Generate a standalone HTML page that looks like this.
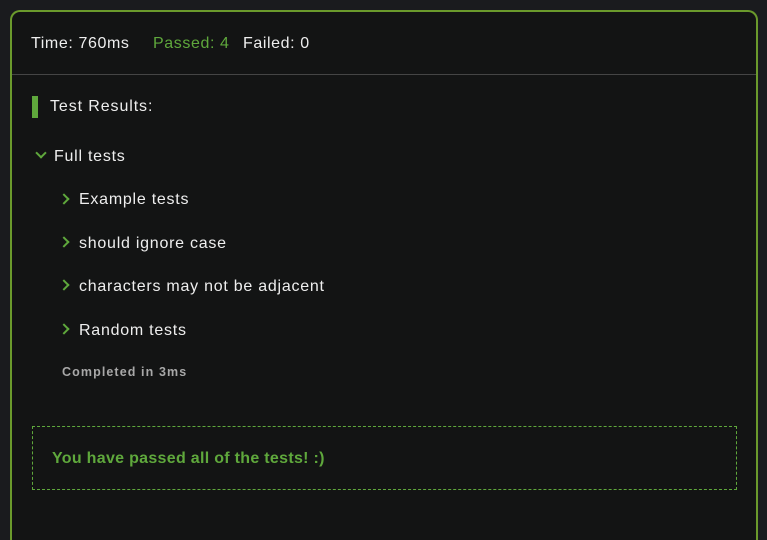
<!DOCTYPE html>
<html style="overflow:hidden;height:540px"><head><style>
body{margin:0;width:767px;height:540px;background:#1a1b1e;overflow:hidden;position:relative;font-family:"Liberation Sans",sans-serif;}
.box{position:absolute;left:10px;top:10px;width:744px;height:528px;border:2px solid #6b9a2c;border-bottom:0;border-radius:10px 10px 0 0;background:#131414;}
.hdr{position:absolute;left:0;top:0;width:744px;height:62px;border-bottom:1px solid #454545;}
.t{position:absolute;font-size:16px;letter-spacing:.75px;color:#eee;white-space:nowrap;}
.g{color:#5fa83c;}
.bar{position:absolute;left:20px;top:84px;width:6px;height:22px;background:#5fa83c;}
.ch{position:absolute;width:6px;height:6px;border-right:2px solid #5fa83c;border-bottom:2px solid #5fa83c;}
.dash{position:absolute;left:20px;top:414px;width:703px;height:62px;border:1px dashed #5fa83c;}
</style></head><body>
<div class="box">
<div class="hdr"></div>
<div class="t" style="left:19px;top:23px;letter-spacing:.6px">Time: 760ms</div>
<div class="t g" style="left:141px;top:23px;letter-spacing:.6px">Passed: 4</div>
<div class="t" style="left:231px;top:23px;letter-spacing:.6px">Failed: 0</div>
<div class="bar"></div>
<div class="t" style="left:38px;top:86px;letter-spacing:.9px">Test Results:</div>
<div class="ch" style="left:25px;top:137px;transform:rotate(45deg)"></div>
<div class="t" style="left:42px;top:136px">Full tests</div>
<div class="ch" style="left:48px;top:183px;transform:rotate(-45deg)"></div>
<div class="t" style="left:67px;top:179px">Example tests</div>
<div class="ch" style="left:48px;top:226px;transform:rotate(-45deg)"></div>
<div class="t" style="left:67px;top:223px">should ignore case</div>
<div class="ch" style="left:48px;top:269px;transform:rotate(-45deg)"></div>
<div class="t" style="left:67px;top:266px">characters may not be adjacent</div>
<div class="ch" style="left:48px;top:313px;transform:rotate(-45deg)"></div>
<div class="t" style="left:67px;top:310px">Random tests</div>
<div class="t" style="left:50px;top:353px;font-size:12.5px;font-weight:bold;color:#a8a8a8;letter-spacing:1.1px">Completed in 3ms</div>
<div class="dash"></div>
<div class="t g" style="left:40px;top:438px;font-weight:bold;letter-spacing:.3px">You have passed all of the tests! :)</div>
</div>
</body></html>
